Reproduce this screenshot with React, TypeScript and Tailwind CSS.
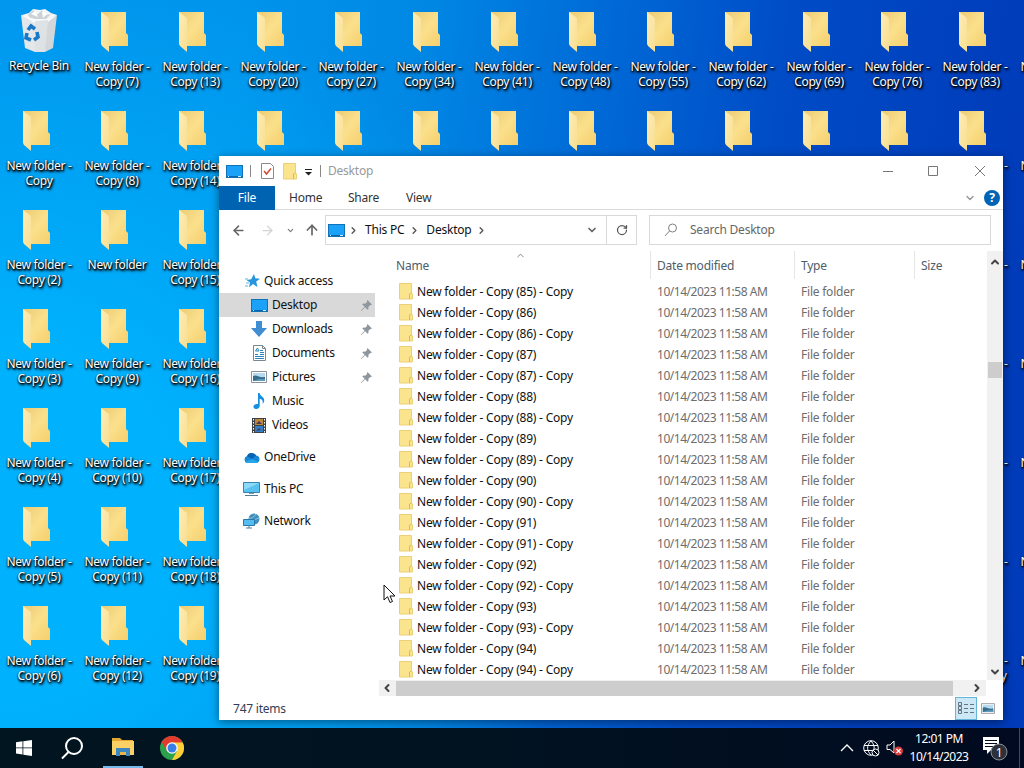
import React from "react";
import {
  ArrowLeft,
  ArrowRight,
  ArrowUp,
  ChevronDown,
  ChevronLeft,
  ChevronRight,
  ChevronUp,
  RotateCw,
} from "lucide-react";

const FOLDER = "New folder";

const desktopItems = [
  "Recycle Bin",
  `${FOLDER} - Copy`,
  ...[2, 3, 4, 5, 6, 7, 8].map((n) => `${FOLDER} - Copy (${n})`),
  FOLDER,
  ...Array.from({ length: 80 }, (_, i) => `${FOLDER} - Copy (${i + 9})`),
  `${FOLDER} - Copy - Copy`,
  ...Array.from({ length: 7 }, (_, i) => `${FOLDER} - Copy (${i + 90})`),
];

const files = Array.from({ length: 19 }, (_, i) => {
  const name = `${FOLDER} - Copy (${85 + Math.ceil(i / 2)})`;
  return i % 2 === 0 ? `${name} - Copy` : name;
});

function BigFolder() {
  return (
    <svg width="30" height="42" viewBox="0 0 30 42">
      <defs>
        <linearGradient id="back" x1="0" y1="0" x2="1" y2="1">
          <stop offset="0" stopColor="#eccb74" />
          <stop offset="0.5" stopColor="#fbe08c" />
          <stop offset="1" stopColor="#f5cf6c" />
        </linearGradient>
        <linearGradient id="flap" x1="0" y1="0" x2="1" y2="1">
          <stop offset="0" stopColor="#feedb6" />
          <stop offset="1" stopColor="#f8de92" />
        </linearGradient>
      </defs>
      <path d="M1 1h25v21l2 2v11H8L1 31z" fill="url(#back)" />
      <path d="M1 1l8 6v34l-7-6-1-2z" fill="url(#flap)" />
    </svg>
  );
}

function RecycleBin() {
  return (
    <svg width="40" height="46" viewBox="0 0 40 46">
      <path d="M3 7l7-2 4-4 7 1 5-1 6 4 6 2-9 6H10z" fill="#f3f5f6" />
      <path d="M9 7l5-5 4 5 5-5 3 5 6-1-5 5H12z" fill="#cdd2d5" />
      <path d="M12 6l4-3 3 6zM23 3l5 3-4 4z" fill="#fff" />
      <path d="M2 7l4 33 10 4V12z" fill="#e4e7e9" />
      <path d="M2 7l14 5v32h10l8-4 4-33-11 5H16z" fill="#d3d7da" />
      <path d="M2 7l14 4h12l10-4-9 7-13 1z" fill="#f8f9fa" />
      <path d="M16 13l13-1-3 32H16z" fill="#dfe2e4" />
      <g stroke="#1979c9" strokeWidth="3.6" fill="none">
        <path d="M9 22l3-4 4 3" />
        <path d="M18 24l1 5-4 3" />
        <path d="M12 32l-5-2 1-5" />
      </g>
    </svg>
  );
}

function SmallFolder() {
  return (
    <svg width="14" height="17" viewBox="0 0 14 17" className="shrink-0">
      <path d="M.5.5h12V10l1 1v5H.5z" fill="#fbe48e" stroke="#ecd077" />
      <path d="M10.5 16v-5l2-1" stroke="#e2b94e" fill="none" />
    </svg>
  );
}

function Monitor() {
  return (
    <svg width="17" height="13" viewBox="0 0 17 13" className="shrink-0">
      <rect x=".5" y=".5" width="16" height="12" fill="#1ba1f7" stroke="#1272b8" />
      <path d="M1 11.5h15" stroke="#0b66ad" />
      <path d="M2 11.5h1M12 11.5h3" stroke="#d7efff" />
    </svg>
  );
}

function Pin() {
  return (
    <svg width="11" height="11" viewBox="0 0 11 11">
      <path
        d="M6.5 0L11 4.500l-1 .6-.7-.2-2 2 .2 2-.9.8L4.200 7.300.4 11l-.4-.4 3.700-3.800L1.300 4.400l.9-.9 2 .2 2-2-.3-.8z"
        fill="#8f979e"
      />
    </svg>
  );
}

function Star() {
  return (
    <svg width="15" height="14" viewBox="0 0 15 14">
      <path
        d="M9 0l1.300 4.300 4.700.4-3.800 2.800L12.500 13 8 10l-4 3.500L5 8.600 1.500 6l4.700-.8z"
        fill="#2695dd"
      />
      <path d="M0 5h3M1 9h3M0 12h3" stroke="#5cb3ea" />
    </svg>
  );
}

function DownloadArrow() {
  return (
    <svg width="16" height="16" viewBox="0 0 16 16">
      <path d="M5 0h6v7h5l-8 9-8-9h5z" fill="#3f8dd2" />
    </svg>
  );
}

function DocumentIcon() {
  return (
    <svg width="13" height="16" viewBox="0 0 13 16">
      <path d="M.5.5h9l3 3v12H.5z" fill="#fff" stroke="#7b8790" />
      <path d="M9.5.5v3h3" stroke="#7b8790" fill="none" />
      <path
        d="M2.500 6l2-3 1.500 3zM7 5.500h3M7 7.500h4M2 9.500h3M7 9.500h4M2 11.500h9M2 13.500h9"
        stroke="#2f83bd"
        fill="none"
      />
    </svg>
  );
}

function PictureIcon({ small }: { small?: boolean }) {
  return (
    <svg width={small ? 14 : 16} height={small ? 11 : 12} viewBox="0 0 16 12">
      <path d="M.5.5h15v11H.5z" fill="#fff" stroke="#8b9197" />
      <path d="M2 2h12v8H2z" fill="#b5daf1" />
      <path d="M2 5c4-2 5 2 12 1v4H2z" fill="#366e8b" />
      <path d="M8 8h6v2H2z" fill="#5d9bbd" />
    </svg>
  );
}

function MusicIcon() {
  return (
    <svg width="12" height="16" viewBox="0 0 12 16">
      <path
        d="M5 0h1.700c.2 3 4.800 4 4.500 7.500-.1 1.700-.8 2.700-1.700 3.500C10.200 8 9.500 6.500 6.700 5.800V13c0 1.600-1.500 3-3.500 3S.5 15 .5 13.700C.5 12 2.500 10.500 5 11z"
        fill="#168fe0"
      />
    </svg>
  );
}

function VideoIcon() {
  return (
    <svg width="14" height="15" viewBox="0 0 14 15">
      <path d="M0 0h14v15H0z" fill="#3e4146" />
      <path d="M3 1h8v6H3z" fill="#bd873c" />
      <path d="M3 8h8v6H3z" fill="#327dc4" />
      <path d="M4 6l3-3 3 3zM4 13l3-3 2 2z" fill="#4b3659" />
      <path d="M1.500 1v14M12.500 1v14" stroke="#fff" strokeDasharray="1.500 1.500" />
    </svg>
  );
}

function OneDriveIcon() {
  return (
    <svg width="17" height="11" viewBox="0 0 17 11">
      <path d="M4 4a5 5 0 0 1 9-.5 3.800 3.800 0 0 1 .5 7.500H4A3.700 3.700 0 0 1 4 4z" fill="#1688d8" />
      <path d="M4 4a5 5 0 0 1 9-.5L9 7z" fill="#0763b5" />
      <path d="M2 10l7-3 6 3-2 1H4z" fill="#28a6ea" />
    </svg>
  );
}

function ThisPcIcon() {
  return (
    <svg width="17" height="16" viewBox="0 0 17 16">
      <path d="M.5 1.500h16v10H.5z" fill="#57c1f2" stroke="#3684ae" />
      <path d="M1 2h15L1 9z" fill="#8bdafa" />
      <path d="M6 12h5v1H6z" fill="#7b9bb0" />
      <path d="M2 14.500h13" stroke="#527c98" />
    </svg>
  );
}

function NetworkIcon() {
  return (
    <svg width="17" height="16" viewBox="0 0 17 16">
      <circle cx="11" cy="6" r="5.500" fill="#4390bc" />
      <path d="M6 5c4 1 5-2 7-4M9 11c0-4 4-5 7-6" stroke="#8dcdee" fill="none" />
      <path d="M.5 6.500h11v6H.5z" fill="#55bdf0" stroke="#2879aa" />
      <path d="M3 15h6M6 12v3" stroke="#4d7f9c" />
    </svg>
  );
}

const sidebar = [
  { label: "Desktop", icon: <Monitor />, pinned: true, active: true },
  { label: "Downloads", icon: <DownloadArrow />, pinned: true },
  { label: "Documents", icon: <DocumentIcon />, pinned: true },
  { label: "Pictures", icon: <PictureIcon />, pinned: true },
  { label: "Music", icon: <MusicIcon /> },
  { label: "Videos", icon: <VideoIcon /> },
];

const roots = [
  { label: "OneDrive", icon: <OneDriveIcon /> },
  { label: "This PC", icon: <ThisPcIcon /> },
  { label: "Network", icon: <NetworkIcon /> },
];

function DesktopItem({ label }: { label: string }) {
  const isBin = label === "Recycle Bin";
  const [, name, rest] = label.match(/^(New folder -) (.*)$/) ?? [];
  return (
    <div className="flex h-[99px] w-[78px] flex-col items-center pt-[11px]">
      <div className={isBin ? "-mt-[3px] h-[50px]" : "h-[48px] pr-[5px]"}>
        {isBin ? <RecycleBin /> : <BigFolder />}
      </div>
      <p className="whitespace-nowrap text-center leading-[15px] tracking-[-0.3px] text-white [text-shadow:1px_1px_2px_#000,0_1px_2px_#000,1px_2px_3px_#000]">
        {name ? (
          <>
            {name}
            <br />
            {rest}
          </>
        ) : (
          label
        )}
      </p>
    </div>
  );
}

function Titlebar() {
  return (
    <div className="flex h-[30px] items-center pl-[7px] text-[#999]">
      <Monitor />
      <span className="ml-[7px] h-3 w-px bg-[#888]" />
      <svg className="ml-[10px]" width="13" height="16" viewBox="0 0 13 16">
        <path d="M.5.5h9l3 3v12H.5z" fill="#fff" stroke="#8a8a8a" />
        <path d="M3 8l2.500 3L10 5.500" fill="none" stroke="#cc4b34" strokeWidth="1.500" />
      </svg>
      <span className="ml-[9px]">
        <SmallFolder />
      </span>
      <svg className="ml-2 mt-0.5" width="7" height="7" viewBox="0 0 7 7">
        <path d="M0 .5h7" stroke="#222" />
        <path d="M0 3h7L3.500 6.500z" fill="#222" />
      </svg>
      <span className="ml-2 h-3 w-px bg-[#888]" />
      <span className="ml-[7px]">Desktop</span>
      <svg
        className="ml-auto mr-[17px]"
        width="104"
        height="12"
        viewBox="0 0 104 12"
        fill="none"
        stroke="#777"
      >
        <path d="M1 6.500h10M46.500 1.500h9v9h-9zM93 1l10 10M103 1L93 11" />
      </svg>
    </div>
  );
}

function Ribbon() {
  return (
    <div className="flex h-6 items-center border-b border-[#dadbdc] text-[#333]">
      <span className="flex h-6 w-14 items-center justify-center bg-[#0063b1] text-white">
        File
      </span>
      <span className="ml-3.5 w-[59px]">Home</span>
      <span className="w-[58px]">Share</span>
      <span>View</span>
      <ChevronDown className="ml-auto mr-2 text-[#999]" size={12} strokeWidth={3} />
      <span className="mr-[3px] flex size-4 items-center justify-center rounded-full bg-[#0064b5] text-[12px] font-bold text-white">
        ?
      </span>
    </div>
  );
}

function AddressBar() {
  return (
    <div className="flex h-10 items-center text-[#111]">
      <ArrowLeft className="ml-3 text-[#666]" size={15} strokeWidth={2.5} />
      <ArrowRight className="ml-3.5 text-[#d3d3d3]" size={15} />
      <ChevronDown className="ml-[11px] text-[#777]" size={9} strokeWidth={3} />
      <ArrowUp className="ml-[9px] text-[#666]" size={16} strokeWidth={2.5} />
      <div className="ml-[5px] flex h-[30px] w-[312px] items-center border border-[#d9d9d9] pl-0.5">
        <Monitor />
        <ChevronRight className="ml-[3px] text-[#555]" size={11} strokeWidth={3} />
        <span className="ml-[6px]">This PC</span>
        <ChevronRight className="ml-[5px] text-[#555]" size={11} strokeWidth={3} />
        <span className="ml-[6px]">Desktop</span>
        <ChevronRight className="ml-[5px] text-[#555]" size={11} strokeWidth={3} />
        <ChevronDown className="ml-auto mr-[8px] text-[#666]" size={12} strokeWidth={3.5} />
        <span className="flex h-7 w-[30px] items-center justify-center border-l border-[#d9d9d9]">
          <RotateCw className="text-[#555]" size={12} strokeWidth={2.5} />
        </span>
      </div>
      <div className="ml-3 flex h-[30px] w-[342px] items-center border border-[#d9d9d9] pl-[14px] text-[#666]">
        <svg width="14" height="14" viewBox="0 0 14 14" fill="none" stroke="#808080">
          <circle cx="8.500" cy="5" r="4" />
          <path d="M5.500 8L1 13" />
        </svg>
        <span className="ml-3">Search Desktop</span>
      </div>
    </div>
  );
}

function Sidebar() {
  return (
    <div className="w-[156px] pt-[18px] text-[#111]">
      <div className="flex h-6 items-center pl-[26px]">
        <Star />
        <span className="ml-1">Quick access</span>
      </div>
      {sidebar.map((item) => (
        <div
          key={item.label}
          className={`flex h-6 items-center pl-8 ${item.active ? "bg-[#d9d9d9]" : ""}`}
        >
          <span className="flex w-4 justify-center">{item.icon}</span>
          <span className="ml-[5px]">{item.label}</span>
          {item.pinned && (
            <span className="ml-auto mr-[3px]">
              <Pin />
            </span>
          )}
        </div>
      ))}
      <div className="mt-2 flex flex-col gap-2">
        {roots.map((item) => (
          <div key={item.label} className="flex h-6 items-center pl-6">
            <span className="flex w-[17px]">{item.icon}</span>
            <span className="ml-1">{item.label}</span>
          </div>
        ))}
      </div>
    </div>
  );
}

function FileList() {
  return (
    <div className="ml-[5px] flex w-[607px] flex-col">
      <div className="flex h-[28px] text-[#4f5d6b]">
        <span className="relative w-[271px] border-r border-[#e5e5e5] pl-4 pt-[6px]">
          Name
          <ChevronUp className="absolute -top-[1px] left-[135px] text-[#777]" size={11} />
        </span>
        <span className="w-36 border-r border-[#e5e5e5] pl-1.5 pt-[6px]">Date modified</span>
        <span className="w-[120px] border-r border-[#e5e5e5] pl-1.5 pt-[6px]">Type</span>
        <span className="pl-1.5 pt-[6px]">Size</span>
      </div>
      <div className="pt-[2px] text-[#6d6d6d]">
        {files.map((name) => (
          <div key={name} className="flex h-[21px] items-center">
            <span className="flex w-[277px] items-center pl-[19px] text-[#111]">
              <SmallFolder />
              <span className="ml-1">{name}</span>
            </span>
            <span className="w-36 tracking-[-0.47px]">10/14/2023 11:58 AM</span>
            <span>File folder</span>
          </div>
        ))}
      </div>
    </div>
  );
}

function Explorer() {
  return (
    <div className="absolute left-[219px] top-[156px] flex h-[564px] w-[784px] flex-col bg-white shadow-[0_2px_9px_rgba(0,0,0,0.45)]">
      <Titlebar />
      <Ribbon />
      <AddressBar />
      <div className="flex h-[430px] pt-px">
        <Sidebar />
        <FileList />
        <div className="flex w-4 flex-col items-center bg-[#f1f1f1] pt-[5px] text-[#444]">
          <ChevronUp size={12} strokeWidth={4} />
          <span className="mt-[94px] h-4 w-3.5 bg-[#cdcdcd]" />
          <ChevronDown className="mb-0.5 mt-auto" size={12} strokeWidth={4} />
        </div>
      </div>
      <div className="ml-40 flex h-4 w-[607px] shrink-0 items-center bg-[#f1f1f1] text-[#444]">
        <ChevronLeft className="ml-0.5 mr-[3px]" size={12} strokeWidth={4} />
        <span className="h-[15px] w-[557px] bg-[#cdcdcd]" />
        <ChevronRight className="ml-auto mr-[3px]" size={12} strokeWidth={4} />
      </div>
      <div className="flex flex-1 items-center pl-3.5 text-[#333d55]">
        <span className="pt-0.5">747 items</span>
        <span className="ml-auto flex h-[23px] w-[22px] items-center justify-center border border-[#65b5d8] bg-[#cce8f7]">
          <svg width="16" height="13" viewBox="0 0 16 13" fill="none" stroke="#66757f">
            <path d="M.5.5h3v3h-3zM.5 4.500h3v3h-3zM.5 8.500h3v3h-3z" />
            <path d="M6 2.500h4M12 2.500h4M6 6.500h4M12 6.500h4M6 10.500h4M12 10.500h4" />
          </svg>
        </span>
        <span className="ml-1 mr-2">
          <PictureIcon small />
        </span>
      </div>
    </div>
  );
}

function Taskbar() {
  return (
    <div className="absolute bottom-0 left-0 flex h-10 w-full items-center bg-gradient-to-r from-[#011520] via-[#011221] to-[#010a20] text-white">
      <svg className="ml-4" width="16" height="16" viewBox="0 0 16 16" fill="#fff">
        <path d="M0 2.200L6.500 1.300v6.200H0zM7.300 1.200L16 0v7.500H7.300zM0 8.300h6.500v6.200L0 13.600zM7.300 8.300H16V16l-8.700-1.200z" />
      </svg>
      <svg
        className="ml-[28px]"
        width="24"
        height="24"
        viewBox="0 0 24 24"
        fill="none"
        stroke="#fff"
        strokeWidth="2"
      >
        <circle cx="14" cy="10" r="8" />
        <path d="M8.500 16L2 22.500" />
      </svg>
      <span className="ml-[19px] flex h-10 w-10 items-center justify-center border-b-2 border-[#76b9ed]">
        <svg width="22" height="18" viewBox="0 0 22 18">
          <path d="M0 0h8l2 2h11v3H0z" fill="#e5a72e" />
          <path d="M0 3h22v14H0z" fill="#fbd166" />
          <path d="M4 10h14v8h-4v-4H8v4H4z" fill="#3c87bd" />
          <path d="M8 14h6v3H8z" fill="#e8b64b" />
        </svg>
      </span>
      <svg className="ml-[17px]" width="24" height="24" viewBox="0 0 24 24">
        <circle cx="12" cy="12" r="12" fill="#2ba24c" />
        <path d="M12 12L1.600 6a12 12 0 0 1 20.800 0z" fill="#e33b2e" />
        <path d="M12 6.500h10.700A12 12 0 0 1 12 24l5-9z" fill="#fdd037" />
        <path d="M1.600 6L7 15l5-8.500z" fill="#e33b2e" />
        <circle cx="12" cy="12" r="5.800" fill="#fff" />
        <circle cx="12" cy="12" r="4.500" fill="#3a7ee8" />
      </svg>
      <svg
        className="ml-auto"
        width="14"
        height="8"
        viewBox="0 0 14 8"
        fill="none"
        stroke="#fff"
        strokeWidth="1.300"
      >
        <path d="M1 7l6-6 6 6" />
      </svg>
      <svg className="ml-[9px]" width="17" height="17" viewBox="0 0 17 17" fill="none" stroke="#fff">
        <circle cx="8" cy="8" r="7.300" />
        <path d="M1 5.500h14M1 10.500h8M8 1c-5 5-4 10 0 14M8 1c3 3 3.500 6 3 8" />
        <circle cx="12.500" cy="12.500" r="3.500" fill="#010a20" />
        <path d="M10 10l5 5" />
      </svg>
      <svg className="ml-[6px]" width="18" height="16" viewBox="0 0 18 16">
        <path d="M1 5h3l4-4v12L4 9.500H1z" fill="none" stroke="#fff" />
        <circle cx="12.500" cy="11" r="4.500" fill="#d93b3b" />
        <path d="M10.500 9l4 4M14.500 9l-4 4" stroke="#fff" strokeWidth="1.200" />
      </svg>
      <div className="ml-1 w-[62px] whitespace-nowrap text-center leading-[18px] tracking-[-0.5px]">
        12:01 PM
        <br />
        10/14/2023
      </div>
      <svg className="ml-3 mr-[16px]" width="26" height="26" viewBox="0 0 26 26">
        <path d="M1 2h16v13H9l-4 4v-4H1z" fill="#fff" />
        <path d="M3 5.500h12M3 8.500h12M3 11.500h8" stroke="#010a20" />
        <circle cx="17" cy="17" r="8" fill="#2b3039" stroke="#8b9098" />
        <text x="17" y="21.500" textAnchor="middle" fontSize="12" fill="#fff">
          1
        </text>
      </svg>
      <span className="absolute right-[4px] h-10 w-px bg-[#444b5b]" />
    </div>
  );
}

export default function App() {
  return (
    <main className="relative h-[768px] w-[1024px] select-none overflow-hidden bg-[radial-gradient(circle_at_0%_68%,#00b2fd_0,#00b2fd_15%,transparent_50%),linear-gradient(98deg,#0092eb_0%,#0094ec_22%,#0087e4_38%,#0066d5_56%,#004cc6_70%,#003ebc_88%,#003ab8_100%)] font-['Noto_Sans','Open_Sans',sans-serif] text-[12px] tracking-[-0.22px]">
      <div className="grid w-[1092px] grid-flow-col grid-cols-[repeat(14,78px)] grid-rows-[repeat(7,99px)]">
        {desktopItems.map((label, i) => (
          <DesktopItem key={i} label={label} />
        ))}
      </div>
      <Explorer />
      <Taskbar />
      <svg
        className="absolute left-[383px] top-[584px]"
        width="13"
        height="20"
        viewBox="0 0 13 20"
      >
        <path d="M1 1v15l3.500-3.300L7 18.500l2.500-1-2.500-5.500H12z" fill="#fff" stroke="#111" />
      </svg>
    </main>
  );
}
